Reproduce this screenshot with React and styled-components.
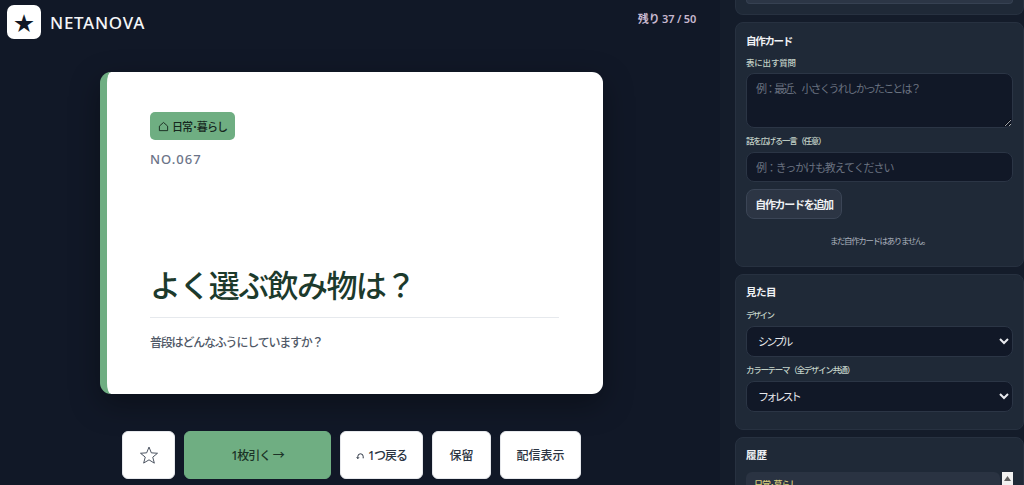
import React from 'react';
import styled, { createGlobalStyle } from 'styled-components';

const FONT = '"Noto Sans", "Noto Sans CJK JP", sans-serif';

const Global = createGlobalStyle`
  html, body { margin: 0; height: 100%; background: #111827; overflow: hidden; }
  #root { height: 485px; }
  * { box-sizing: border-box; }
  body, button, input, textarea, select { font-family: ${FONT}; font-feature-settings: "pkna" 1; }
`;

const Page = styled.div`
  display: grid;
  grid-template-columns: 720px 304px;
  width: 1024px;
  height: 485px;
  overflow: hidden;
`;

const Main = styled.main`
  display: flex;
  flex-direction: column;
  height: 485px;
  overflow: hidden;
  padding: 5px 24px 0 7px;
  background: #111827;
`;

const Header = styled.header`
  display: flex;
  justify-content: space-between;
  align-items: flex-start;
  height: 67px;
`;

const Brand = styled.div`
  display: flex;
  align-items: center;
  gap: 9px;
`;

const Logo = styled.div`
  width: 34px;
  height: 34px;
  border-radius: 7px;
  background: #fff;
  display: flex;
  align-items: center;
  justify-content: center;
  color: #111827;
  font-size: 20px;
`;

const BrandName = styled.div`
  color: #f4f5f7;
  font-size: 17px;
  font-weight: 500;
  letter-spacing: .7px;
`;

const Remain = styled.div`
  color: #c8b8d0;
  font-size: 11px;
  font-weight: 600;
  margin-top: 5px;
  letter-spacing: -.2px;
`;

const Card = styled.section`
  width: 503px;
  height: 322px;
  margin-left: 93px;
  flex: none;
  background: #fff;
  border-left: 7px solid #6fae82;
  border-radius: 11px;
  padding: 40px 44px 0 43px;
  box-shadow: 0 10px 30px rgba(0,0,0,.35);
  display: flex;
  flex-direction: column;
  align-items: flex-start;
`;

const Tag = styled.div`
  display: flex;
  align-items: center;
  gap: 3px;
  height: 28px;
  padding: 0 8px;
  border-radius: 5px;
  background: #6fae82;
  color: #16271e;
  font-size: 11px;
  font-weight: 500;
  letter-spacing: -.9px;
`;

const CardNo = styled.div`
  margin-top: 10px;
  color: #6b7488;
  font-size: 13px;
  font-weight: 500;
  letter-spacing: 1px;
  line-height: 18px;
`;

const Question = styled.h1`
  margin: 94px 0 0;
  color: #1c3a2c;
  font-size: 31px;
  font-weight: 500;
  letter-spacing: -1.6px;
  line-height: 46px;
  white-space: nowrap;
`;

const Rule = styled.div`
  width: 100%;
  height: 1px;
  margin-top: 9px;
  background: #e6e9ed;
`;

const Hint = styled.p`
  margin: 16px 0 0;
  color: #4f5866;
  font-size: 12px;
  font-weight: 500;
  letter-spacing: -1.2px;
  line-height: 18px;
`;

const Actions = styled.div`
  display: flex;
  gap: 9px;
  margin: 37px 0 0 115px;
`;

const Action = styled.button`
  height: 48px;
  width: ${p => p.$w}px;
  flex: none;
  padding: 0;
  border: 1px solid #e6e8ec;
  border-radius: 6px;
  background: ${p => (p.$primary ? '#6fae82' : '#fff')};
  border-color: ${p => (p.$primary ? '#6fae82' : '#e6e8ec')};
  color: ${p => (p.$primary ? '#1c3327' : '#2b3442')};
  font-size: 12px;
  font-weight: 500;
  letter-spacing: ${p => p.$ls ?? 0}px;
  display: flex;
  align-items: center;
  justify-content: center;
  gap: 3px;
`;

const Side = styled.aside`
  display: flex;
  flex-direction: column;
  gap: 7px;
  height: 485px;
  overflow: hidden;
  padding-left: 15px;
  background: #141c2a;
`;

const Panel = styled.section`
  flex: none;
  background: #1f2937;
  border: 1px solid #273140;
  border-radius: 8px;
  padding: ${p => p.$pt ?? 10}px 10px 0 10px;
  width: 289px;
  height: ${p => p.$h}px;
  position: relative;
  overflow: hidden;
`;

const ClippedPanel = styled(Panel)`
  border-top: none;
  border-radius: 0 0 8px 8px;
  padding: 0 10px;
`;

const ClippedInput = styled.div`
  height: 4px;
  background: #2c3646;
  border: 1px solid #364152;
  border-top: none;
  border-radius: 0 0 8px 8px;
`;

const PanelTitle = styled.h2`
  margin: 0;
  color: #f0f2f5;
  font-size: 10.5px;
  font-weight: 700;
  letter-spacing: ${p => p.$ls ?? 0}px;
  line-height: 15px;
`;

const Label = styled.label`
  display: block;
  margin-top: ${p => p.$mt ?? 8}px;
  color: #c3d2c8;
  font-size: 8.5px;
  font-weight: 500;
  letter-spacing: ${p => p.$ls ?? -1.3}px;
  line-height: 12px;
`;

const Area = styled.textarea`
  display: block;
  width: 100%;
  height: 55px;
  margin-top: 4px;
  padding: 7px 9px;
  background: #111827;
  border: 1px solid #2b3545;
  border-radius: 8px;
  color: #e5e7eb;
  font-size: 11px;
  letter-spacing: -1.9px;
  line-height: 16px;
  outline: none;
  &::placeholder { color: #6a7280; }
`;

const Field = styled.input`
  display: block;
  width: 100%;
  height: 30px;
  margin-top: 5px;
  padding: 0 9px;
  background: #111827;
  border: 1px solid #2b3545;
  border-radius: 8px;
  color: #e5e7eb;
  font-size: 11px;
  letter-spacing: -1.1px;
  outline: none;
  &::placeholder { color: #6a7280; }
`;

const AddButton = styled.button`
  display: block;
  height: 30px;
  width: 96px;
  margin-top: 7px;
  padding: 0;
  background: #2c3544;
  border: 1px solid #3b4556;
  border-radius: 8px;
  color: #eef0f3;
  font-size: 11px;
  font-weight: 600;
  letter-spacing: -1.3px;
`;

const Empty = styled.p`
  margin: 16px 0 0;
  text-align: center;
  color: #a9b0bc;
  font-size: 8.5px;
  letter-spacing: -1.4px;
  line-height: 12px;
`;

const Select = styled.select`
  display: block;
  width: 100%;
  height: 31px;
  margin-top: 5px;
  padding: 0 7px;
  background: #111827;
  border: 1px solid #2b3545;
  border-radius: 8px;
  color: #e8eaee;
  font-size: 11px;
  letter-spacing: -2.8px;
  color-scheme: dark;
  outline: none;
`;

const HistoryRow = styled.div`
  display: flex;
  gap: 2px;
  margin-top: 9px;
`;

const HistoryItem = styled.div`
  flex: 1;
  height: 40px;
  padding: 7px 8px;
  background: #2a3342;
  border-radius: 6px 6px 0 0;
  color: #d9cf7c;
  font-size: 9px;
  font-weight: 500;
  letter-spacing: -1px;
  line-height: 12px;
`;

const ScrollTrack = styled.div`
  flex: none;
  width: 11px;
  height: 40px;
  background: #f1f1f1;
  display: flex;
  justify-content: center;
  padding-top: 4px;
`;

function HomeIcon() {
  return (
    <svg width="11" height="11" viewBox="0 0 12 12" fill="none" stroke="#16271e" strokeWidth="1" strokeLinejoin="round">
      <path d="M1.5 5.6 6 1.6l4.5 4v4.9h-9z" />
    </svg>
  );
}

function StarOutline() {
  return (
    <svg width="20" height="20" viewBox="0 0 24 24" fill="none" stroke="#3b4452" strokeWidth="1.1" strokeLinejoin="round">
      <path d="M12 2.5l2.8 6.9 7.4.5-5.7 4.7 1.9 7.2L12 17.8l-6.4 3.9 1.9-7.2L1.8 9.9l7.4-.5z" />
    </svg>
  );
}

function UndoIcon() {
  return (
    <svg width="9" height="9" viewBox="0 0 10 10" fill="none" stroke="#2b3442" strokeWidth="1.1" style={{ marginTop: 3 }}>
      <path d="M2 7V5a3 3 0 0 1 6 0v2" />
      <path d="M.8 5.8 2 7.4l1.3-1.5" />
    </svg>
  );
}

function ArrowUp() {
  return (
    <svg width="7" height="5" viewBox="0 0 7 5">
      <path d="M3.5 0 7 5H0z" fill="#606060" />
    </svg>
  );
}

export default function App() {
  return (
    <>
      <Global />
      <Page>
        <Main>
          <Header>
            <Brand>
              <Logo>★</Logo>
              <BrandName>NETANOVA</BrandName>
            </Brand>
            <Remain>残り 37 / 50</Remain>
          </Header>
          <Card>
            <Tag><HomeIcon />日常･暮らし</Tag>
            <CardNo>NO.067</CardNo>
            <Question>よく選ぶ飲み物は？</Question>
            <Rule />
            <Hint>普段はどんなふうにしていますか？</Hint>
          </Card>
          <Actions>
            <Action $w={53} aria-label="お気に入り"><StarOutline /></Action>
            <Action $w={147} $primary $ls={-.9}>1枚引く →</Action>
            <Action $w={83} $ls={-1}><UndoIcon />1つ戻る</Action>
            <Action $w={59}>保留</Action>
            <Action $w={81}>配信表示</Action>
          </Actions>
        </Main>
        <Side>
          <ClippedPanel $h={15}><ClippedInput /></ClippedPanel>
          <Panel $h={245} $pt={11}>
            <PanelTitle $ls={-1.3}>自作カード</PanelTitle>
            <Label $ls={-.2}>表に出す質問</Label>
            <Area placeholder="例：最近、小さくうれしかったことは？" />
            <Label $mt={7}>話を広げる一言（任意）</Label>
            <Field placeholder="例：きっかけも教えてください" />
            <AddButton>自作カードを追加</AddButton>
            <Empty>まだ自作カードはありません。</Empty>
          </Panel>
          <Panel $h={156}>
            <PanelTitle $ls={-.5}>見た目</PanelTitle>
            <Label $mt={9} $ls={-1.7}>デザイン</Label>
            <Select defaultValue="シンプル"><option>シンプル</option></Select>
            <Label $mt={7}>カラーテーマ（全デザイン共通）</Label>
            <Select defaultValue="フォレスト"><option>フォレスト</option></Select>
          </Panel>
          <Panel $h={60}>
            <PanelTitle>履歴</PanelTitle>
            <HistoryRow>
              <HistoryItem>日常･暮らし</HistoryItem>
              <ScrollTrack><ArrowUp /></ScrollTrack>
            </HistoryRow>
          </Panel>
        </Side>
      </Page>
    </>
  );
}
